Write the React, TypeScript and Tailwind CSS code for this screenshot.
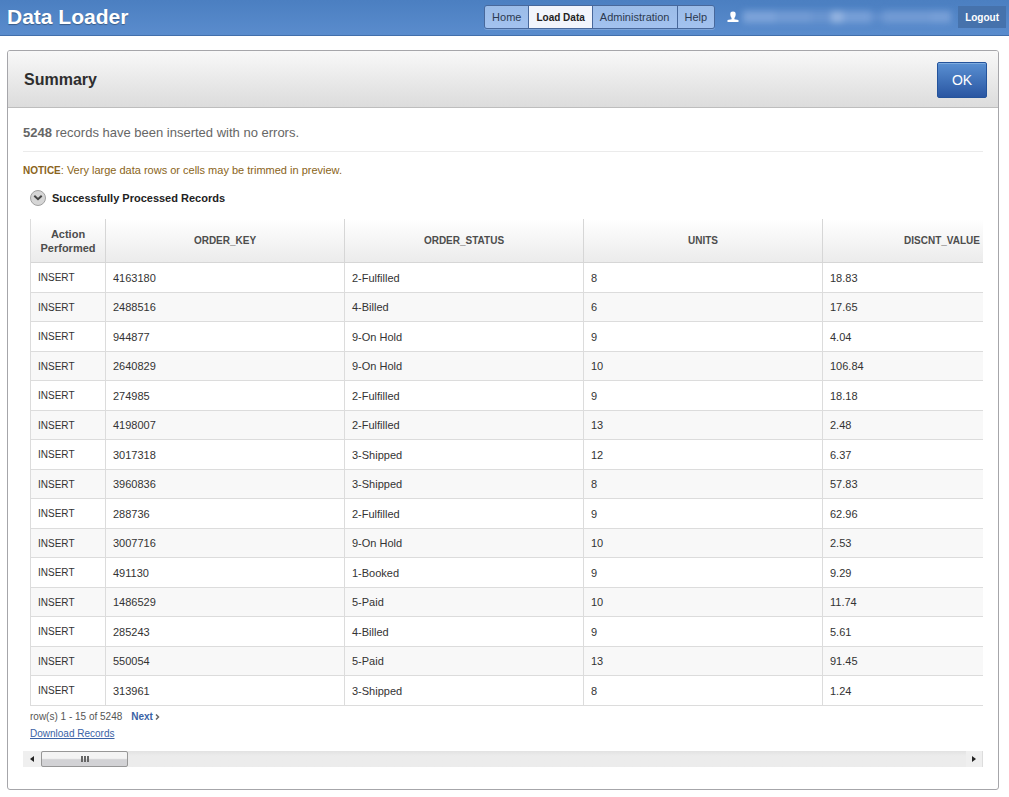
import { useRef } from "react";

const columns = ["ORDER_KEY", "ORDER_STATUS", "UNITS", "DISCNT_VALUE"];

const records = [
  ["4163180", "2-Fulfilled", "8", "18.83"],
  ["2488516", "4-Billed", "6", "17.65"],
  ["944877", "9-On Hold", "9", "4.04"],
  ["2640829", "9-On Hold", "10", "106.84"],
  ["274985", "2-Fulfilled", "9", "18.18"],
  ["4198007", "2-Fulfilled", "13", "2.48"],
  ["3017318", "3-Shipped", "12", "6.37"],
  ["3960836", "3-Shipped", "8", "57.83"],
  ["288736", "2-Fulfilled", "9", "62.96"],
  ["3007716", "9-On Hold", "10", "2.53"],
  ["491130", "1-Booked", "9", "9.29"],
  ["1486529", "5-Paid", "10", "11.74"],
  ["285243", "4-Billed", "9", "5.61"],
  ["550054", "5-Paid", "13", "91.45"],
  ["313961", "3-Shipped", "8", "1.24"],
];

const tabs = [
  { label: "Home", current: false },
  { label: "Load Data", current: true },
  { label: "Administration", current: false },
  { label: "Help", current: false },
];

function TopBar() {
  return (
    <header className="flex h-9 items-center border-b border-[#426fab] bg-linear-to-b from-[#4b7fc1] to-[#5a8ccd] pr-[3px] pb-px pl-[7px]">
      <div className="grow text-[21px] leading-6 font-bold text-white text-shadow-[0_1px_1px_#00000055]">
        Data Loader
      </div>
      <nav className="flex h-6 overflow-hidden rounded-[3px] border border-[#48689b] shadow-[0_1px_0_#7ba3d8]">
        {tabs.map((tab) => (
          <a
            key={tab.label}
            href="#"
            aria-current={tab.current ? "page" : undefined}
            className={
              tab.current
                ? "flex items-center border-r border-[#48689b] bg-[#f2f5fc] px-[7px] text-[10px] font-bold text-[#222]"
                : "flex items-center border-r border-[#48689b] bg-linear-to-b from-[#9bbce8] to-[#a3c2ef] px-[7px] text-[11px] text-[#2c3a50] last:border-r-0"
            }
          >
            {tab.label}
          </a>
        ))}
      </nav>
      <div className="ml-3 flex items-center gap-1">
        <svg width="12" height="12" viewBox="0 0 12 12" fill="#fff" aria-hidden="true">
          <path d="M6 0.500C4.200 0.500 3.300 1.300 3.300 3c0 1.600.5 2.900 1.300 4v1.200L0.500 9v2h11V9L7.400 8.200V7c.8-1.100 1.300-2.400 1.300-4C8.700 1.300 7.800 0.500 6 0.500z" />
        </svg>
        <div className="flex h-4 w-[208px] items-center blur-[3px]" aria-hidden="true">
          <span className="h-3 w-8 bg-[#7ca3d9]" />
          <span className="h-3 w-9 bg-[#729bd4]" />
          <span className="h-3 w-5 bg-[#6a95d0]" />
          <span className="h-3 w-3 bg-[#93b3e0]" />
          <span className="h-3 w-7 bg-[#779fd7]" />
          <span className="h-2 w-3 bg-[#6490ce]" />
          <span className="h-3 w-12 bg-[#729bd4]" />
          <span className="h-3 w-5 bg-[#779fd7]" />
        </div>
      </div>
      <a
        href="#"
        className="ml-[7px] flex h-[22px] items-center bg-[#4672ac] px-[7px] text-[10px] font-bold text-white"
      >
        Logout
      </a>
    </header>
  );
}

function ResultTable() {
  return (
    <table className="w-[1032px] table-fixed border-separate border-spacing-0 border-l border-[#dcdcdc] text-[11px] leading-[14px]">
      <thead>
        <tr className="h-11 bg-linear-to-b from-white to-[#ebebeb] text-[#4d4d4d]">
          <th scope="col" className="w-[75px] border-r border-b border-[#d6d6d6] p-0 text-[11px]">
            Action Performed
          </th>
          {columns.map((name) => (
            <th key={name} scope="col" className="border-r border-b border-[#d6d6d6] p-0 pt-px text-[10px]">
              {name}
            </th>
          ))}
        </tr>
      </thead>
      <tbody className="text-[#333]">
        {records.map((record) => (
          <tr key={record[0]} className="odd:h-[30px] even:h-[29px] even:bg-[#f8f8f8]">
            <td className="border-r border-b border-[#dcdcdc] px-[7px] pt-px pb-0 text-[10px]">INSERT</td>
            {record.map((value, i) => (
              <td key={columns[i]} className="border-r border-b border-[#dcdcdc] px-[7px] py-0">
                {value}
              </td>
            ))}
          </tr>
        ))}
      </tbody>
    </table>
  );
}

export default function App() {
  const viewport = useRef<HTMLDivElement>(null);
  const scroll = (left: number) => viewport.current?.scrollBy({ left });

  return (
    <div className="bg-white font-['Liberation_Sans',Arial,sans-serif]">
      <TopBar />
      <main className="mt-[14px] mr-[10px] mb-[7px] ml-[7px] rounded-[3px] border border-[#a6a6aa]">
        <div className="flex h-[57px] items-center justify-between rounded-t-[2px] border-b border-[#bdbdbd] bg-linear-to-b from-[#f8f8f8] to-[#dcdcdc] pt-[2px] pr-[11px] pl-4">
          <h1 className="text-[16px] leading-5 font-bold text-[#2e2e2e]">Summary</h1>
          <button
            type="button"
            className="h-9 w-[50px] rounded-[2px] border border-[#24539b] bg-linear-to-b from-[#5a90d2] to-[#2a56a2] text-[14px] text-white shadow-[inset_0_1px_0_#7facdf]"
          >
            OK
          </button>
        </div>
        <div className="px-[15px] pb-[22px]">
          <p className="border-b border-[#ebebeb] pt-4 pb-[10px] text-[13px] leading-[17px] text-[#666]">
            <strong>5248</strong> records have been inserted with no errors.
          </p>
          <p className="mt-[11px] text-[11px] leading-[14px] text-[#8a6420]">
            <strong className="text-[10px]">NOTICE</strong>: Very large data rows or cells may be trimmed in preview.
          </p>
          <div ref={viewport} className="mt-[11px] overflow-hidden pl-[7px]">
            <div className="flex h-[18px] items-center gap-[6px]">
              <button type="button" aria-label="Collapse" className="size-4">
                <svg width="16" height="16" viewBox="0 0 16 16" aria-hidden="true">
                  <circle cx="8" cy="8" r="7.500" fill="#d6d6d6" stroke="#a0a0a0" />
                  <path d="M4.300 5.800 8 9.200l3.700-3.400" fill="none" stroke="#444" strokeWidth="2" />
                </svg>
              </button>
              <h2 className="text-[11px] font-bold text-[#222]">Successfully Processed Records</h2>
            </div>
            <div className="mt-3">
              <ResultTable />
            </div>
            <div className="mt-1 flex items-center gap-[9px] text-[10px] leading-[14px] text-[#555]">
              <span>row(s) 1 - 15 of 5248</span>
              <a href="#" className="flex items-center gap-[2px] font-bold text-[#3a62a5]">
                Next
                <svg width="5" height="7" viewBox="0 0 5 7" aria-hidden="true">
                  <path d="M1 0.500l2.500 2.500L1 5.500" fill="none" stroke="#666" strokeWidth="1.500" />
                </svg>
              </a>
            </div>
            <a href="#" className="mt-[3px] block w-fit text-[10px] leading-[14px] text-[#3a62a5] underline">
              Download Records
            </a>
          </div>
          <div className="mt-[10px] flex h-4 bg-linear-to-b from-[#e2e2e2] to-[#ececec] to-30%">
            <button
              type="button"
              aria-label="Scroll left"
              onClick={() => scroll(-75)}
              className="flex w-[18px] items-center justify-center bg-[#efefef]"
            >
              <svg width="4" height="6" viewBox="0 0 4 6" aria-hidden="true">
                <path d="M4 0v6L0 3z" fill="#222" />
              </svg>
            </button>
            <div className="flex w-[87px] items-center justify-center gap-px rounded-[2px] border border-[#979797] bg-linear-to-b from-[#f4f4f4] from-45% to-[#d2d2d5] to-55%">
              <span className="h-[6px] w-[2px] bg-[#666]" />
              <span className="h-[6px] w-[2px] bg-[#666]" />
              <span className="h-[6px] w-[2px] bg-[#666]" />
            </div>
            <button
              type="button"
              aria-label="Scroll right"
              onClick={() => scroll(75)}
              className="ml-auto flex w-[17px] items-center justify-center border-r border-[#ddd] bg-[#efefef]"
            >
              <svg width="4" height="6" viewBox="0 0 4 6" aria-hidden="true">
                <path d="M0 0v6l4-3z" fill="#222" />
              </svg>
            </button>
          </div>
        </div>
      </main>
    </div>
  );
}
